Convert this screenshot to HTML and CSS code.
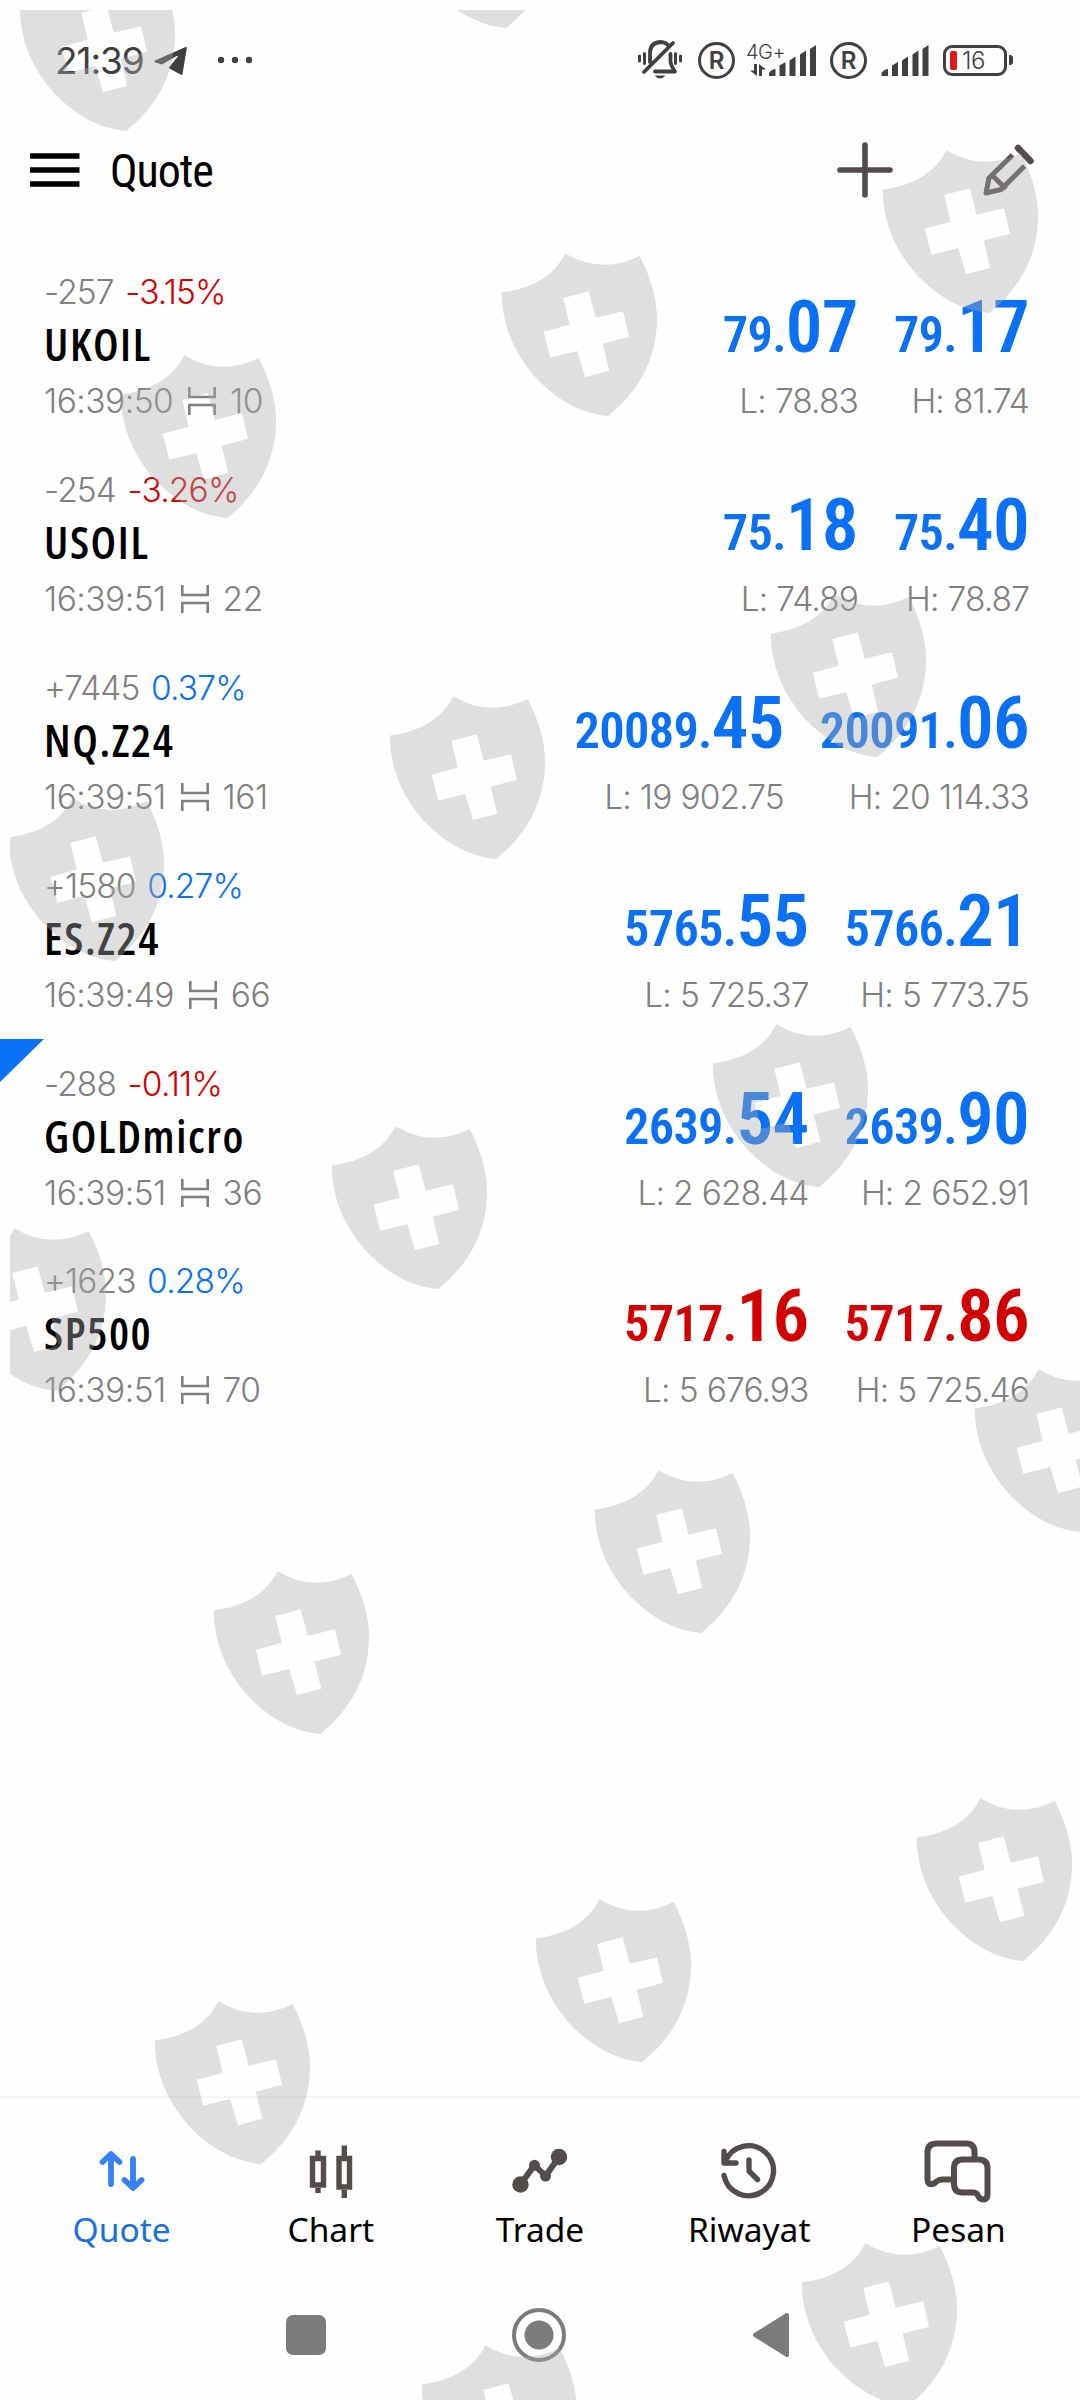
FILE: index.html
```html
<!DOCTYPE html>
<html lang="id">
<head>
    <meta charset="UTF-8">
    <meta name="viewport" content="width=device-width, initial-scale=1.0">
    <title>Quote</title>
    <link rel="stylesheet" href="styles.css">
</head>
<body>
    <div class="screen">
        <!-- Status bar -->
        <div class="status-bar">
            <span class="clock">21:39</span>
            <svg class="telegram" width="34" height="30" viewBox="0 0 34 30"><path d="M1 14.500L31.500 1Q33 0.500 32.800 2.200L28.500 28Q28 29.500 26.500 28.500L14.500 22L23.500 11Q24 9.500 22.500 10L8 18.500L1.500 16.500Q-0.500 15.500 1 14.500Z" fill="#3f3f3f"/></svg>
            <svg width="36" height="8" viewBox="0 0 36 8" fill="#404040"><circle cx="4" cy="4" r="3.200"/><circle cx="18" cy="4" r="3.200"/><circle cx="32" cy="4" r="3.200"/></svg>
            <div class="status-right">
                <svg class="bell" width="44" height="40" viewBox="0 0 44 40" fill="none" stroke="#404040" stroke-width="3" stroke-linecap="round" stroke-linejoin="round">
                    <path d="M1.500 16v5M6.500 13.500v10M42.500 16v5M37.500 13.500v10"/>
                    <path d="M12 22V13Q12 3 22 2Q27 2 30 5M32.500 14V21Q32.500 25 37 31.500H17M6 32L35 3" stroke-width="3.800"/>
                    <path d="M16.500 35.500H27.500Q22 41.500 16.500 35.500Z" fill="#404040" stroke="none"/>
                </svg>
                <span class="reg">R</span>
                <div class="network">
                    <div class="network-type">
                        <span>4G+</span>
                        <svg width="16" height="12" viewBox="0 0 16 12" fill="#404040"><path d="M4 0H7V12L0 6.500H4ZM9 12V0L16 5.500H12V12Z"/></svg>
                    </div>
                    <svg width="47" height="31" viewBox="0 0 47 31" fill="#404040"><path d="M0 31V28Q3 24 6.500 24V31ZM10.500 31V20.500L16.500 17V31ZM20.500 31V15.500L26.500 11.500V31ZM31 31V9.500L37 5.500V31ZM41 31V4L47 0V31Z"/></svg>
                </div>
                <span class="reg">R</span>
                <svg class="bars" width="48" height="31" viewBox="0 0 47 31" fill="#404040"><path d="M0 31V28Q3 24 6.500 24V31ZM10.500 31V20.500L16.500 17V31ZM20.500 31V15.500L26.500 11.500V31ZM31 31V9.500L37 5.500V31ZM41 31V4L47 0V31Z"/></svg>
                <div class="battery"><i class="battery-level"></i><span>16</span></div>
                <i class="battery-tip"></i>
            </div>
        </div>

        <!-- Header -->
        <header class="header">
            <svg width="50" height="34" viewBox="0 0 50 34"><path d="M0 3H49.500M0 17H49.500M0 31H49.500" stroke="#000" stroke-width="5.600"/></svg>
            <h1>Quote</h1>
            <svg class="add" width="56" height="56" viewBox="0 0 56 56"><path d="M3 28H53M28 3V53" stroke="#544b4b" stroke-width="5.600" stroke-linecap="round"/></svg>
            <svg width="52" height="54" viewBox="0 0 52 54" fill="none" stroke="#544b4b" stroke-width="5">
                <path d="M30.500 12L7 35L4 50L19 46.500L42.500 23M10 32L24 46" stroke-linejoin="round"/>
                <path d="M36 5L48.500 18" stroke-width="6.500" stroke-linecap="round"/>
            </svg>
        </header>

        <!-- Quotes -->
        <main class="quotes">
            <div class="quote">
                <div class="info">
                    <div class="change">-257 <span class="down">-3.15%</span></div>
                    <div class="symbol">UKOIL</div>
                    <div class="time">16:39:50 <svg class="spread"><use href="#spread"/></svg> 10</div>
                </div>
                <div class="price up"><p>79.<b>07</b></p><small>L: 78.83</small></div>
                <div class="price up"><p>79.<b>17</b></p><small>H: 81.74</small></div>
            </div>
            <div class="quote">
                <div class="info">
                    <div class="change">-254 <span class="down">-3.26%</span></div>
                    <div class="symbol">USOIL</div>
                    <div class="time">16:39:51 <svg class="spread"><use href="#spread"/></svg> 22</div>
                </div>
                <div class="price up"><p>75.<b>18</b></p><small>L: 74.89</small></div>
                <div class="price up"><p>75.<b>40</b></p><small>H: 78.87</small></div>
            </div>
            <div class="quote">
                <div class="info">
                    <div class="change">+7445 <span class="up">0.37%</span></div>
                    <div class="symbol">NQ.Z24</div>
                    <div class="time">16:39:51 <svg class="spread"><use href="#spread"/></svg> 161</div>
                </div>
                <div class="price up"><p>20089.<b>45</b></p><small>L: 19 902.75</small></div>
                <div class="price up"><p>20091.<b>06</b></p><small>H: 20 114.33</small></div>
            </div>
            <div class="quote">
                <div class="info">
                    <div class="change">+1580 <span class="up">0.27%</span></div>
                    <div class="symbol">ES.Z24</div>
                    <div class="time">16:39:49 <svg class="spread"><use href="#spread"/></svg> 66</div>
                </div>
                <div class="price up"><p>5765.<b>55</b></p><small>L: 5 725.37</small></div>
                <div class="price up"><p>5766.<b>21</b></p><small>H: 5 773.75</small></div>
            </div>
            <div class="quote flagged">
                <div class="info">
                    <div class="change">-288 <span class="down">-0.11%</span></div>
                    <div class="symbol">GOLDmicro</div>
                    <div class="time">16:39:51 <svg class="spread"><use href="#spread"/></svg> 36</div>
                </div>
                <div class="price up"><p>2639.<b>54</b></p><small>L: 2 628.44</small></div>
                <div class="price up"><p>2639.<b>90</b></p><small>H: 2 652.91</small></div>
            </div>
            <div class="quote">
                <div class="info">
                    <div class="change">+1623 <span class="up">0.28%</span></div>
                    <div class="symbol">SP500</div>
                    <div class="time">16:39:51 <svg class="spread"><use href="#spread"/></svg> 70</div>
                </div>
                <div class="price down"><p>5717.<b>16</b></p><small>L: 5 676.93</small></div>
                <div class="price down"><p>5717.<b>86</b></p><small>H: 5 725.46</small></div>
            </div>
        </main>

        <!-- Bottom tabs -->
        <nav class="tabs">
            <a class="tab active">
                <svg width="80" height="70" viewBox="0 0 80 70" fill="none" stroke="#3880f7" stroke-width="5.800" stroke-linecap="round" stroke-linejoin="round"><path d="M29 50V21M20.500 28L29 20L37.500 28M51 25V53M42.500 46L51 54L59.500 46"/></svg>
                <span>Quote</span>
            </a>
            <a class="tab">
                <svg width="80" height="70" viewBox="0 0 80 70" fill="none" stroke="#544b4b" stroke-width="5.400"><path d="M29.500 24.500H21.500V51H32.500V24.500H28M27 16.500V22M27 54V59M48 24.500H58.500V53H48ZM53.300 11.500V22M53.300 56V64"/></svg>
                <span>Chart</span>
            </a>
            <a class="tab">
                <svg width="80" height="70" viewBox="0 0 80 70" fill="#544b4b" stroke="#544b4b" stroke-width="0"><path d="M20.500 50.500L34.500 31L45.500 42L59 23" fill="none" stroke-width="6" stroke-linejoin="round"/><circle cx="20.500" cy="50.500" r="8.200"/><circle cx="34.500" cy="31.300" r="5.500"/><circle cx="45.500" cy="42" r="5.500"/><circle cx="59" cy="23" r="8.200"/></svg>
                <span>Trade</span>
            </a>
            <a class="tab">
                <svg width="80" height="70" viewBox="0 0 80 70" fill="none" stroke="#544b4b" stroke-width="5.400" stroke-linecap="round" stroke-linejoin="round"><path d="M15 41.500A25 25 0 1 0 16.500 27M15 17.500V29H27M40 26V37L48.500 45.500"/></svg>
                <span>Riwayat</span>
            </a>
            <a class="tab">
                <svg width="80" height="70" viewBox="0 0 80 70" fill="none" stroke="#544b4b" stroke-width="6" stroke-linejoin="round">
                    <path d="M56.500 24V18Q56.500 9.500 48 9.500H19Q9.500 9.500 9.500 18V45Q9.500 51 14 50Q17 49.500 18.500 47.500Q21 45.500 24 45.500H36"/>
                    <path d="M45 25.500H60Q69.500 25.500 69.500 34V60Q69.500 65.500 65.500 65.500Q61.500 65.500 60 61.500Q58.500 58.500 55 58.500H45Q36 58.500 36 50V34Q36 25.500 45 25.500Z"/>
                </svg>
                <span>Pesan</span>
            </a>
        </nav>

        <!-- System navigation -->
        <div class="system-nav">
            <i class="recents"></i>
            <i class="home"></i>
            <svg width="38" height="48" viewBox="0 0 38 48"><path d="M3 24L35 4V44Z" fill="#7b7b7b" stroke="#7b7b7b" stroke-width="4" stroke-linejoin="round"/></svg>
        </div>
    </div>

    <!-- Shield watermark -->
    <svg class="watermark" width="1070" height="2390" viewBox="10 10 1070 2390">
        <defs>
            <path id="shield" fill-rule="evenodd" d="M34.700 69.500Q82 63.500 98.500 30.300Q134 52 172.700 33Q191 68 190 100Q188 155 141.300 193Q102 190 68 154Q35 116 34.700 69.500ZM96.300 75L102.700 101.700L76.700 108.700L83.300 134.700L110.300 128L118 154.300L142.300 147.700L135.700 120.700L162 113.700L156 88.300L128.700 94.700L121.700 68.300Z"/>
            <path id="spread" d="M1.300 0V10H26.700V0M1.300 28V18H26.700V28" fill="none" stroke="#808080" stroke-width="2.600"/>
        </defs>
        <use href="#shield" x="-15" y="-62"/>
        <use href="#shield" x="365" y="-165"/>
        <use href="#shield" x="848" y="120"/>
        <use href="#shield" x="467" y="223"/>
        <use href="#shield" x="86" y="325"/>
        <use href="#shield" x="736" y="564"/>
        <use href="#shield" x="355" y="666"/>
        <use href="#shield" x="-26" y="768"/>
        <use href="#shield" x="678" y="994"/>
        <use href="#shield" x="297" y="1096"/>
        <use href="#shield" x="-84" y="1198"/>
        <use href="#shield" x="940" y="1339"/>
        <use href="#shield" x="560" y="1440"/>
        <use href="#shield" x="179" y="1541"/>
        <use href="#shield" x="882" y="1768"/>
        <use href="#shield" x="501" y="1869"/>
        <use href="#shield" x="120" y="1971"/>
        <use href="#shield" x="767" y="2213"/>
        <use href="#shield" x="387" y="2315"/>
    </svg>
</body>
</html>
```
FILE: styles.css
```css
* {
    box-sizing: border-box;
}
body {
    margin: 0;
    background: #fefefe;
    font-family: Inter, sans-serif;
}
h1, p {
    margin: 0;
}
svg, i {
    display: block;
    flex: none;
}
.screen {
    display: flex;
    flex-direction: column;
    width: 1080px;
    height: 2400px;
    overflow: hidden;
}

/* status bar */
.status-bar {
    display: flex;
    align-items: center;
    height: 120px;
    padding: 0 67px 0 55px;
}
.clock {
    width: 98px;
    font-size: 37px;
    font-weight: 400;
    letter-spacing: -1.1px;
    color: #404040;
}
.telegram {
    margin: 2px 29px 0 1px;
}
.status-right {
    display: flex;
    align-items: center;
    margin-left: auto;
}
.bell {
    margin-right: 16px;
}
.reg {
    display: flex;
    align-items: center;
    justify-content: center;
    width: 37px;
    height: 37px;
    border: 3.5px solid #404040;
    border-radius: 50%;
    font-size: 24px;
    font-weight: 600;
    color: #404040;
}
.network {
    display: flex;
    align-items: flex-end;
    width: 70px;
    height: 36px;
    margin: 0 14px 0 11px;
    padding-bottom: 2px;
}
.network-type {
    width: 23px;
    white-space: nowrap;
    color: #404040;
}
.network-type span {
    display: block;
    font-size: 20px;
    line-height: 20px;
    font-weight: 300;
    letter-spacing: -0.5px;
}
.network-type svg {
    margin: 2px 0 0 4px;
}
.bars {
    margin: 0 14px 0 14px;
}
.battery {
    display: flex;
    align-items: center;
    width: 64px;
    height: 31px;
    padding-left: 4px;
    border: 3px solid #404040;
    border-radius: 9px;
    font-size: 24px;
    font-weight: 350;
    letter-spacing: -0.5px;
    color: #404040;
}
.battery-level {
    width: 7px;
    height: 19px;
    margin-right: 5px;
    border-radius: 2px;
    background: #dc1c1c;
}
.battery-tip {
    width: 4px;
    height: 10px;
    margin-left: 2px;
    border-radius: 0 3px 3px 0;
    background: #404040;
}

/* header */
.header {
    display: flex;
    align-items: center;
    height: 127px;
    padding: 0 46px 27px 30px;
}
.header h1 {
    margin: 2px 0 0 30px;
    font: 430 46px/60px Roboto, sans-serif;
    font-stretch: 75%;
    letter-spacing: -1.1px;
}
.header .add {
    margin: 0 89px 0 auto;
}

/* quotes */
.quote {
    position: relative;
    display: flex;
    height: 197.9px;
    padding: 26px 51px 0 44px;
}
.flagged::before {
    content: "";
    position: absolute;
    left: 0;
    top: 0;
    border-top: 43px solid #0a70f5;
    border-right: 44px solid transparent;
}
.info {
    flex: 1;
}
.change, .time, .price small {
    font-size: 33.5px;
    line-height: 40px;
    font-weight: 340;
    letter-spacing: -0.9px;
    color: #808080;
    white-space: pre;
}
.change {
    margin-top: -1px;
}
.change span {
    margin-left: 3px;
    letter-spacing: -0.8px;
}
.symbol {
    margin: 6px 0 11px;
    font: 600 45px/52px "Open Sans", sans-serif;
    font-stretch: 75%;
    letter-spacing: 1.6px;
    color: #000;
}
.time {
    display: flex;
    align-items: center;
    letter-spacing: -0.5px;
}
.spread {
    width: 28px;
    height: 28px;
    margin: 0 5px 0 6px;
}
.price {
    margin-left: 36px;
    text-align: right;
}
.price p {
    margin: 22px 0 6px;
    font: 600 50.5px/80px Roboto, sans-serif;
    font-stretch: 75%;
    letter-spacing: -0.7px;
    white-space: nowrap;
}
.price b {
    font-size: 73px;
    line-height: 1px;
    font-weight: 600;
}
.price small {
    display: block;
    word-spacing: 0.6px;
}
.up, .change .up {
    color: #0a70f5;
}
.down, .change .down {
    color: #d20000;
}

/* bottom tabs */
.tabs {
    display: flex;
    margin-top: auto;
    height: 170px;
    padding: 36px 17px 0;
    border-top: 2px solid #f5f5f5;
}
.tab {
    display: flex;
    flex-direction: column;
    align-items: center;
    flex: 1;
    color: #000;
    font: 33.5px/50px "Noto Sans", sans-serif;
}
.tab.active {
    color: #1a6fe0;
}

/* system navigation */
.system-nav {
    display: flex;
    align-items: center;
    height: 134px;
    padding: 4px 0 0 286px;
}
.recents {
    width: 40px;
    height: 40px;
    border-radius: 7px;
    background: #7b7b7b;
}
.home {
    width: 54px;
    height: 54px;
    margin: 0 186px;
    border: 4.5px solid #7b7b7b;
    border-radius: 50%;
    background: radial-gradient(circle, #7b7b7b 14px, transparent 15px);
}

.watermark {
    position: absolute;
    left: 10px;
    top: 10px;
    fill: #aeaeae;
    opacity: 0.38;
    pointer-events: none;
}
```
